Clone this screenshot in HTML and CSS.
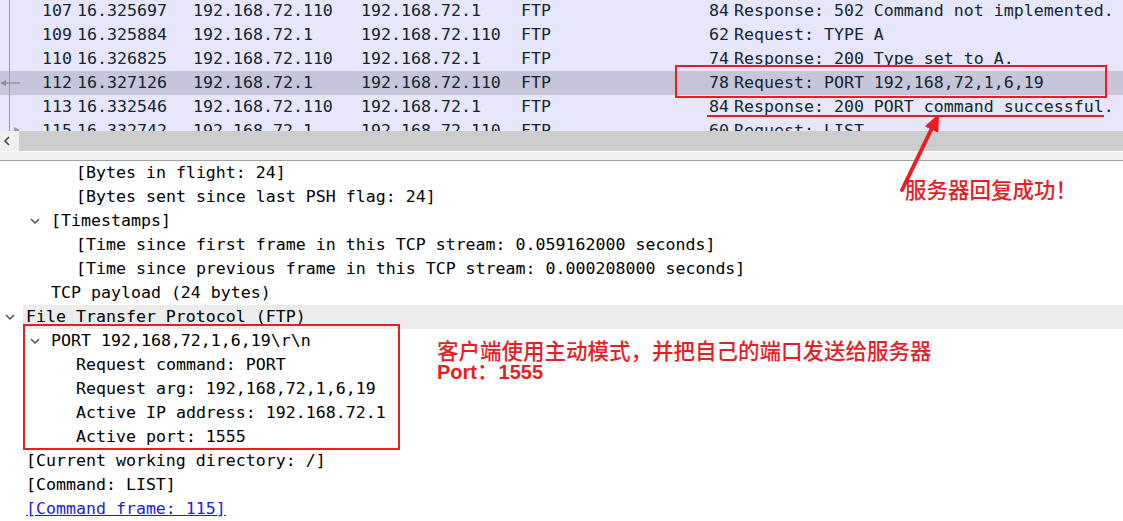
FILE: index.html
```html
<!DOCTYPE html>
<html>
<head>
<meta charset="utf-8">
<link rel="stylesheet" href="styles.css">
</head>
<body>
<div class="app">
  <div class="plist">
    <div class="rows">
      <div class="row"><span class="no">107</span><span class="time">16.325697</span><span class="src">192.168.72.110</span><span class="dst">192.168.72.1</span><span class="proto">FTP</span><span class="len">84</span><span class="info">Response: 502 Command not implemented.</span></div>
      <div class="row"><span class="no">109</span><span class="time">16.325884</span><span class="src">192.168.72.1</span><span class="dst">192.168.72.110</span><span class="proto">FTP</span><span class="len">62</span><span class="info">Request: TYPE A</span></div>
      <div class="row"><span class="no">110</span><span class="time">16.326825</span><span class="src">192.168.72.110</span><span class="dst">192.168.72.1</span><span class="proto">FTP</span><span class="len">74</span><span class="info">Response: 200 Type set to A.</span></div>
      <div class="row sel"><span class="no">112</span><span class="time">16.327126</span><span class="src">192.168.72.1</span><span class="dst">192.168.72.110</span><span class="proto">FTP</span><span class="len">78</span><span class="info">Request: PORT 192,168,72,1,6,19</span></div>
      <div class="row"><span class="no">113</span><span class="time">16.332546</span><span class="src">192.168.72.110</span><span class="dst">192.168.72.1</span><span class="proto">FTP</span><span class="len">84</span><span class="info">Response: 200 PORT command successful.</span></div>
      <div class="row"><span class="no">115</span><span class="time">16.332742</span><span class="src">192.168.72.1</span><span class="dst">192.168.72.110</span><span class="proto">FTP</span><span class="len">60</span><span class="info">Request: LIST</span></div>
    </div>
    <div class="rel-line"></div>
    <svg class="rel-arrow" width="22" height="10" viewBox="0 0 22 10"><path d="M1 5 H20" stroke="#8c8c8c" stroke-width="1.2"/><path d="M1 5 L6 2 L6 8 Z" fill="#8c8c8c"/></svg>
    <svg class="rel-tri" width="8" height="8" viewBox="0 0 8 8"><path d="M1 1 L7 4 L1 7 Z" fill="#9a9a9a"/></svg>
  </div>
  <div class="hscroll">
    <div class="hbtn"><svg width="8" height="10" viewBox="0 0 8 10"><path d="M6 1 L2 5 L6 9" fill="none" stroke="#404040" stroke-width="1.6"/></svg></div>
    <div class="htrack"></div>
  </div>
  <div class="splitter"></div>
  <div class="tree">
    <div class="node ind2"><span class="tog"></span><span class="label">[Bytes in flight: 24]</span></div>
    <div class="node ind2"><span class="tog"></span><span class="label">[Bytes sent since last PSH flag: 24]</span></div>
    <div class="node ind1"><span class="tog"><svg width="10" height="6" viewBox="0 0 10 6"><path d="M1 1 L5 5 L9 1" fill="none" stroke="#555" stroke-width="1.5"/></svg></span><span class="label">[Timestamps]</span></div>
    <div class="node ind2"><span class="tog"></span><span class="label">[Time since first frame in this TCP stream: 0.059162000 seconds]</span></div>
    <div class="node ind2"><span class="tog"></span><span class="label">[Time since previous frame in this TCP stream: 0.000208000 seconds]</span></div>
    <div class="node ind1"><span class="tog"></span><span class="label">TCP payload (24 bytes)</span></div>
    <div class="node hl"><span class="tog"><svg width="10" height="6" viewBox="0 0 10 6"><path d="M1 1 L5 5 L9 1" fill="none" stroke="#555" stroke-width="1.5"/></svg></span><span class="label">File Transfer Protocol (FTP)</span></div>
    <div class="node ind1"><span class="tog"><svg width="10" height="6" viewBox="0 0 10 6"><path d="M1 1 L5 5 L9 1" fill="none" stroke="#555" stroke-width="1.5"/></svg></span><span class="label">PORT 192,168,72,1,6,19\r\n</span></div>
    <div class="node ind2"><span class="tog"></span><span class="label">Request command: PORT</span></div>
    <div class="node ind2"><span class="tog"></span><span class="label">Request arg: 192,168,72,1,6,19</span></div>
    <div class="node ind2"><span class="tog"></span><span class="label">Active IP address: 192.168.72.1</span></div>
    <div class="node ind2"><span class="tog"></span><span class="label">Active port: 1555</span></div>
    <div class="node"><span class="tog"></span><span class="label">[Current working directory: /]</span></div>
    <div class="node"><span class="tog"></span><span class="label">[Command: LIST]</span></div>
    <div class="node"><span class="tog"></span><span class="label link">[Command frame: 115]</span></div>
  </div>

  <div class="mark box1"></div>
  <div class="mark uline"></div>
  <div class="mark box2"></div>
  <svg class="arrow" width="50" height="90" viewBox="0 0 50 90"><path d="M7 80 L37 18" stroke="#ec1c24" stroke-width="4" stroke-linecap="round"/><path d="M43 6 L42.4 21.3 L31.6 16.1 Z" fill="#ec1c24" stroke="#ec1c24" stroke-width="2" stroke-linejoin="round"/></svg>
  <div class="note note1">
    <div class="nline">客户端使用主动模式，并把自己的端口发送给服务器</div>
    <div class="nline"><span class="lat">Port</span>：<span class="lat">1555</span></div>
  </div>
  <div class="note note2">服务器回复成功！</div>
</div>
</body>
</html>
```

FILE: styles.css
```css
html, body {
  margin: 0;
  padding: 0;
  background: #ffffff;
}

.app {
  position: relative;
  width: 1123px;
  height: 521px;
  overflow: hidden;
  font-family: "DejaVu Sans Mono", "Liberation Mono", monospace;
  font-size: 16.6px;
}

.plist {
  position: relative;
  height: 131px;
  overflow: hidden;
  background: #e7e6fa;
}

.rows {
  margin-top: -1px;
}

.row {
  display: flex;
  height: 24px;
  line-height: 24px;
  color: #12272e;
  white-space: pre;
}

.row.sel {
  background: #c7c5d9;
}

.no {
  flex: none;
  width: 72px;
  text-align: right;
}

.time {
  flex: none;
  width: 116px;
  margin-left: 5px;
}

.src {
  flex: none;
  width: 168px;
}

.dst {
  flex: none;
  width: 160px;
}

.proto {
  flex: none;
  width: 160px;
}

.len {
  flex: none;
  width: 48px;
  text-align: right;
}

.info {
  margin-left: 5px;
}

.rel-line {
  position: absolute;
  left: 9px;
  top: 0;
  width: 1px;
  height: 131px;
  background: #9c9c9c;
}

.rel-arrow {
  position: absolute;
  left: 0;
  top: 78px;
}

.rel-tri {
  position: absolute;
  left: 13px;
  top: 126px;
}

.hscroll {
  display: flex;
  height: 20px;
}

.hbtn {
  flex: none;
  width: 19px;
  background: #f0f0f0;
  display: flex;
  align-items: center;
  padding-left: 3px;
  box-sizing: border-box;
}

.htrack {
  flex: 1;
  background: #cdcdcd;
}

.splitter {
  height: 8px;
  background: #f0f0f0;
  border-top: 1px solid #ffffff;
  border-bottom: 1px solid #a0a0a0;
}

.tree {
  color: #000000;
}

.node {
  display: flex;
  height: 24px;
  line-height: 24px;
  white-space: pre;
}

.node.ind1 {
  padding-left: 25px;
}

.node.ind2 {
  padding-left: 50px;
}

.tog {
  flex: none;
  width: 26px;
  display: flex;
  align-items: center;
}

.tog svg {
  margin-left: 5px;
}

.node.hl .label {
  flex: 1;
  margin-left: -3px;
  padding-left: 3px;
  background: #ececec;
}

.link {
  color: #1c1ce0;
  text-decoration: underline;
}

.mark {
  position: absolute;
  box-sizing: border-box;
}

.box1 {
  left: 675px;
  top: 65px;
  width: 432px;
  height: 33px;
  border: 2px solid #ec1c24;
}

.uline {
  left: 707px;
  top: 115px;
  width: 397px;
  height: 2px;
  background: #ec1c24;
}

.box2 {
  left: 23px;
  top: 324px;
  width: 377px;
  height: 126px;
  border: 2px solid #ec1c24;
}

.arrow {
  position: absolute;
  left: 895px;
  top: 110px;
}

.note {
  position: absolute;
  color: #ec1c24;
  font-family: "Noto Sans CJK SC", sans-serif;
  font-size: 21.5px;
  font-weight: 500;
  white-space: nowrap;
}

.nline {
  height: 20px;
  line-height: 20px;
}

.note1 {
  left: 437px;
  top: 340px;
}

.note2 {
  left: 905px;
  top: 178px;
  line-height: 21px;
}

.lat {
  font-family: "Liberation Sans", sans-serif;
  font-weight: bold;
  font-size: 20px;
}
```
